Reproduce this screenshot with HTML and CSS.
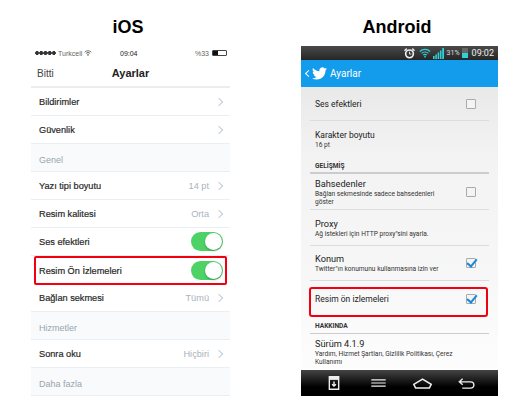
FILE: index.html
```html
<!DOCTYPE html>
<html lang="en">
  <head>
    <meta charset="UTF-8" />
    <title>iOS / Android Ayarlar</title>
    <link rel="stylesheet" href="styles.css">
  </head>
  <body>
    <div class="page">
      <section class="col col-ios">
        <h1 class="os-title">iOS</h1>
        <div class="ios">
          <div class="ios-status">
            <span class="ios-carrier"><i class="ios-dots"></i>Turkcell
              <svg class="ios-wifi" viewBox="0 0 12 9"><path d="M1 3.2a7 7 0 0 1 10 0M2.8 5a4.500 4.500 0 0 1 6.400 0M4.500 6.700a2 2 0 0 1 3 0" fill="none" stroke="#333" stroke-width="1"/><circle cx="6" cy="8" r=".8" fill="#333"/></svg>
            </span>
            <span class="ios-time">09:04</span>
            <span class="ios-batt">%33<i class="batt"><b></b></i></span>
          </div>
          <div class="ios-nav">
            <span class="ios-done">Bitti</span>
            <span class="ios-nav-title">Ayarlar</span>
          </div>
          <div class="ios-row"><span>Bildirimler</span><i class="chev"></i></div>
          <div class="ios-row"><span>Güvenlik</span><i class="chev"></i></div>
          <div class="ios-section">Genel</div>
          <div class="ios-row"><span>Yazı tipi boyutu</span><em>14 pt</em><i class="chev"></i></div>
          <div class="ios-row"><span>Resim kalitesi</span><em>Orta</em><i class="chev"></i></div>
          <div class="ios-row"><span>Ses efektleri</span><i class="toggle"></i></div>
          <div class="ios-row marked"><span>Resim Ön İzlemeleri</span><i class="toggle"></i></div>
          <div class="ios-row"><span>Bağlan sekmesi</span><em>Tümü</em><i class="chev"></i></div>
          <div class="ios-section">Hizmetler</div>
          <div class="ios-row"><span>Sonra oku</span><em>Hiçbiri</em><i class="chev"></i></div>
          <div class="ios-section">Daha fazla</div>
        </div>
      </section>

      <section class="col col-android">
        <h1 class="os-title">Android</h1>
        <div class="android">
          <div class="and-status">
            <svg class="and-alarm" viewBox="0 0 12 12"><circle cx="6" cy="6.400" r="4.200" fill="none" stroke="#eee" stroke-width="1.800"/><path d="M6 4v2.600h2" fill="none" stroke="#eee"/><path d="M.5 3 3 .7M11.500 3 9 .7" stroke="#eee" stroke-width="1.600"/></svg>
            <svg class="and-wifi" viewBox="0 0 14 11"><path d="M1 3.800a8.400 8.400 0 0 1 12 0M3 6a5.600 5.600 0 0 1 8 0M5 8a2.800 2.800 0 0 1 4 0" fill="none" stroke="#2fd0da" stroke-width="1.400"/><circle cx="7" cy="9.800" r="1" fill="#2fd0da"/></svg>
            <svg class="and-signal" viewBox="0 0 11 11"><path d="M0 11V8h1.600v3zM2.300 11V6.500h1.600V11zM4.600 11V4.500h1.600V11zM6.900 11V2.500h1.600V11zM9.200 11V0H11v11z" fill="#2fd0da"/></svg>
            <span class="and-pct">31%</span>
            <i class="and-batt"></i>
            <span class="and-time">09:02</span>
          </div>
          <div class="and-bar">
            <span class="and-back"></span>
            <svg class="and-bird" viewBox="0 0 24 24"><path fill="#fff" d="M23.953 4.57a10 10 0 01-2.825.775 4.958 4.958 0 002.163-2.723c-.951.555-2.005.959-3.127 1.184a4.92 4.92 0 00-8.384 4.482C7.69 8.095 4.067 6.13 1.64 3.162a4.822 4.822 0 00-.666 2.475c0 1.71.87 3.213 2.188 4.096a4.904 4.904 0 01-2.228-.616v.06a4.923 4.923 0 003.946 4.827 4.996 4.996 0 01-2.212.085 4.936 4.936 0 004.604 3.417 9.867 9.867 0 01-6.102 2.105c-.39 0-.779-.023-1.17-.067a13.995 13.995 0 007.557 2.209c9.053 0 13.998-7.496 13.998-13.985 0-.21 0-.42-.015-.63A9.935 9.935 0 0024 4.59z"/></svg>
            <span class="and-bar-title">Ayarlar</span>
          </div>
          <div class="and-list">
            <div class="and-row h34 line">
              <div class="and-text"><span class="small-title">Ses efektleri</span></div>
              <i class="check"></i>
            </div>
            <div class="and-row h34 pushed">
              <div class="and-text"><span class="small-title">Karakter boyutu</span><small>16 pt</small></div>
            </div>
            <div class="and-head">GELİŞMİŞ</div>
            <div class="and-row h36 line">
              <div class="and-text"><span>Bahsedenler</span><small>Bağlan sekmesinde sadece bahsedenleri<br>göster</small></div>
              <i class="check"></i>
            </div>
            <div class="and-row h36 line">
              <div class="and-text"><span>Proxy</span><small>Ağ istekleri için HTTP proxy"sini ayarla.</small></div>
            </div>
            <div class="and-row h35 line">
              <div class="and-text"><span>Konum</span><small>Twitter"ın konumunu kullanmasına izin ver</small></div>
              <i class="check on"></i>
            </div>
            <div class="and-row marked">
              <div class="and-text"><span class="small-title">Resim ön izlemeleri</span></div>
              <i class="check on"></i>
            </div>
            <div class="and-head about">HAKKINDA</div>
            <div class="and-row last">
              <div class="and-text"><span>Sürüm 4.1.9</span><small>Yardım, Hizmet Şartları, Gizlilik Politikası, Çerez<br>Kullanımı</small></div>
            </div>
          </div>
          <div class="and-nav">
            <svg viewBox="0 0 14 18" class="nav-save"><path d="M1 1h12v16H1z" fill="none" stroke="#eee" stroke-width="1.800"/><path d="M1 1h12v4H1z" fill="#eee"/><path d="M7 7v6M4.500 10.500 7 13l2.500-2.500" fill="none" stroke="#eee" stroke-width="1.800"/></svg>
            <svg viewBox="0 0 18 10" class="nav-menu"><path d="M0 1h18M0 5h18M0 9h18" stroke="#eee" stroke-width="1.500"/></svg>
            <svg viewBox="0 0 22 12" class="nav-home"><path d="M1.500 7 11 1.200 20.500 7l-2 4h-15z" fill="none" stroke="#eee" stroke-width="1.700"/></svg>
            <svg viewBox="0 0 20 13" class="nav-back"><path d="M5.500 1 1.500 4.500l4 3.500M1.500 4.500H15a3.500 3.500 0 0 1 0 7.500H5" fill="none" stroke="#eee" stroke-width="1.600"/></svg>
          </div>
        </div>
      </section>
    </div>
  </body>
</html>
```

FILE: styles.css
```css
* {
  margin: 0;
  padding: 0;
  box-sizing: border-box;
}

body {
  background: #fff;
  overflow: hidden;
}

.page {
  display: flex;
  width: 525px;
  height: 416px;
  padding-left: 31px;
  gap: 71px;
}

.col-ios {
  width: 199px;
}

.col-android {
  width: 197px;
}

.os-title {
  height: 46px;
  padding-top: 16px;
  padding-right: 5px;
  font: bold 18px/22px "Liberation Sans", sans-serif;
  color: #000;
  text-align: center;
}

/* iOS */
.ios {
  font-family: "Liberation Sans", sans-serif;
  color: #2a2a2a;
}

.ios-status {
  display: flex;
  align-items: center;
  height: 14px;
  font-size: 7px;
  color: #666;
  padding: 0 3px 0 4px;
}

.ios-carrier {
  display: flex;
  align-items: center;
  gap: 2px;
  width: 85px;
}

.ios-dots {
  display: block;
  width: 21px;
  height: 4px;
  background: radial-gradient(circle, #333 1.7px, transparent 2.1px) 0 0 / 4.2px 4px;
}

.ios-time {
  color: #222;
  font-size: 7px;
}

.ios-wifi {
  width: 8px;
  height: 6px;
}

.ios-batt {
  display: flex;
  flex: 1;
  justify-content: flex-end;
  align-items: center;
  gap: 3px;
}

.batt {
  display: block;
  width: 15px;
  height: 6px;
  border: 1px solid #444;
  border-radius: 1px;
}

.batt b {
  display: block;
  width: 5px;
  height: 4px;
  background: #111;
}

.ios-nav {
  display: flex;
  align-items: center;
  height: 28px;
  position: relative;
  padding-left: 6px;
  border-bottom: 2px solid #ebeef1;
  font-size: 10px;
  color: #444;
}

.ios-nav-title {
  position: absolute;
  left: 0;
  right: 0;
  text-align: center;
  font-size: 11px;
  font-weight: bold;
  color: #222;
}

.ios-row {
  display: flex;
  align-items: center;
  height: 28px;
  padding: 0 8px;
  font-size: 9.2px;
  border-bottom: 1px solid #eaeff3;
  -webkit-text-stroke: 0.2px #2a2a2a;
}

.ios-row span {
  flex: 1;
}

.ios-row em {
  font-style: normal;
  color: #a9b3bc;
  margin-right: 7px;
  -webkit-text-stroke: 0;
}

.chev {
  display: block;
  width: 6px;
  height: 6px;
  border-top: 1px solid #c0cbd6;
  border-right: 1px solid #c0cbd6;
  transform: rotate(45deg);
}

.toggle {
  display: block;
  position: relative;
  width: 32px;
  height: 19px;
  margin-right: -1px;
  border-radius: 10px;
  background: #4cd265;
}

.toggle::after {
  content: "";
  position: absolute;
  right: 1px;
  top: 1px;
  width: 17px;
  height: 17px;
  border-radius: 50%;
  background: #fff;
  box-shadow: 0 1px 2px rgba(0, 0, 0, 0.3);
}

.ios-section {
  display: flex;
  align-items: center;
  height: 28px;
  padding: 4px 8px 0;
  font-size: 9px;
  color: #98a5b1;
  background: #f8fafb;
  border-bottom: 1px solid #eaeff3;
}

.ios-row.marked {
  height: 29px;
  margin: 0 3px -1px;
  padding: 0 5px;
  border-bottom: 0;
  border-radius: 2px;
  outline: 2px solid #f2000f;
  outline-offset: -2px;
}

/* Android */
.android {
  font-family: Roboto, sans-serif;
  color: #222;
}

.and-status {
  display: flex;
  align-items: center;
  justify-content: flex-end;
  gap: 2px;
  height: 14px;
  padding-right: 4px;
  background: linear-gradient(#4a4a4a, #262626);
  color: #eee;
}

.and-alarm {
  width: 11px;
  height: 11px;
  margin-right: 2px;
}

.and-wifi {
  width: 12px;
  height: 10px;
}

.and-signal {
  width: 11px;
  height: 11px;
}

.and-pct {
  font-size: 7px;
  color: #ddd;
  margin-left: 1px;
}

.and-batt {
  display: block;
  width: 6px;
  height: 10px;
  background: linear-gradient(#666 50%, #2fd0da 50%);
  margin-right: 2px;
}

.and-time {
  font-size: 9px;
}

.and-bar {
  display: flex;
  align-items: center;
  height: 27px;
  padding-left: 5px;
  background: #129ceb;
  color: #fff;
  font-size: 10px;
}

.and-back {
  display: block;
  width: 5px;
  height: 5px;
  border-left: 1px solid #fff;
  border-bottom: 1px solid #fff;
  transform: rotate(45deg);
  margin-right: 1px;
}

.and-bird {
  width: 15px;
  height: 15px;
  margin-right: 3px;
}

.and-list {
  display: flex;
  flex-direction: column;
  height: 283px;
  padding: 0 9px;
  overflow: hidden;
  background: linear-gradient(#e9e9e9, #f3f3f3 25%, #f6f6f6 60%, #fdfdfd);
}

.and-row {
  display: flex;
  align-items: center;
  flex: none;
}

.and-text {
  flex: 1;
  padding-left: 5px;
}

.and-text span {
  display: block;
  font-size: 9.2px;
  line-height: 12px;
}

.and-text .small-title {
  font-size: 8.5px;
}

.and-text small {
  display: block;
  font-size: 6.6px;
  line-height: 8px;
  color: #333;
}

.h34 {
  height: 34px;
}

.h36 {
  height: 36px;
}

.h35 {
  height: 35px;
}

.pushed {
  padding-top: 2px;
}

.line {
  border-bottom: 1px solid #dcdcdc;
}

.check {
  display: block;
  position: relative;
  width: 10px;
  height: 10px;
  margin-right: 13px;
  border: 1px solid #aaa;
  background: #f4f4f4;
  border-radius: 1px;
}

.check.on::after {
  content: "";
  position: absolute;
  left: 2px;
  top: -2px;
  width: 4px;
  height: 8px;
  border-right: 2px solid #1489d8;
  border-bottom: 2px solid #1489d8;
  transform: rotate(40deg);
}

.and-head {
  flex: none;
  height: 19px;
  padding: 7px 0 0 5px;
  font-size: 6.6px;
  font-weight: bold;
  color: #333;
  border-bottom: 2px solid #ccc;
}

.and-head.about {
  height: 17px;
  padding-top: 5px;
  border-bottom-width: 1px;
}

.and-row.marked {
  height: 30px;
  margin: 6px 1px 0 -1px;
  padding-bottom: 7px;
  border: 2px solid #f2000f;
  border-radius: 3px;
}

.and-row.marked .and-text {
  padding-left: 4px;
}

.and-row.marked .check {
  margin-right: 10px;
}

.and-row.last {
  padding-top: 4px;
}

.and-nav {
  display: grid;
  grid-template-columns: repeat(4, 44px);
  justify-items: center;
  align-items: center;
  height: 26px;
  padding-left: 11px;
  background: linear-gradient(#444, #000 65%);
}

.nav-save {
  width: 12px;
  height: 14px;
}

.nav-menu {
  width: 17px;
  height: 8px;
}

.nav-home {
  width: 21px;
  height: 11px;
}

.nav-back {
  width: 19px;
  height: 11px;
}
```
